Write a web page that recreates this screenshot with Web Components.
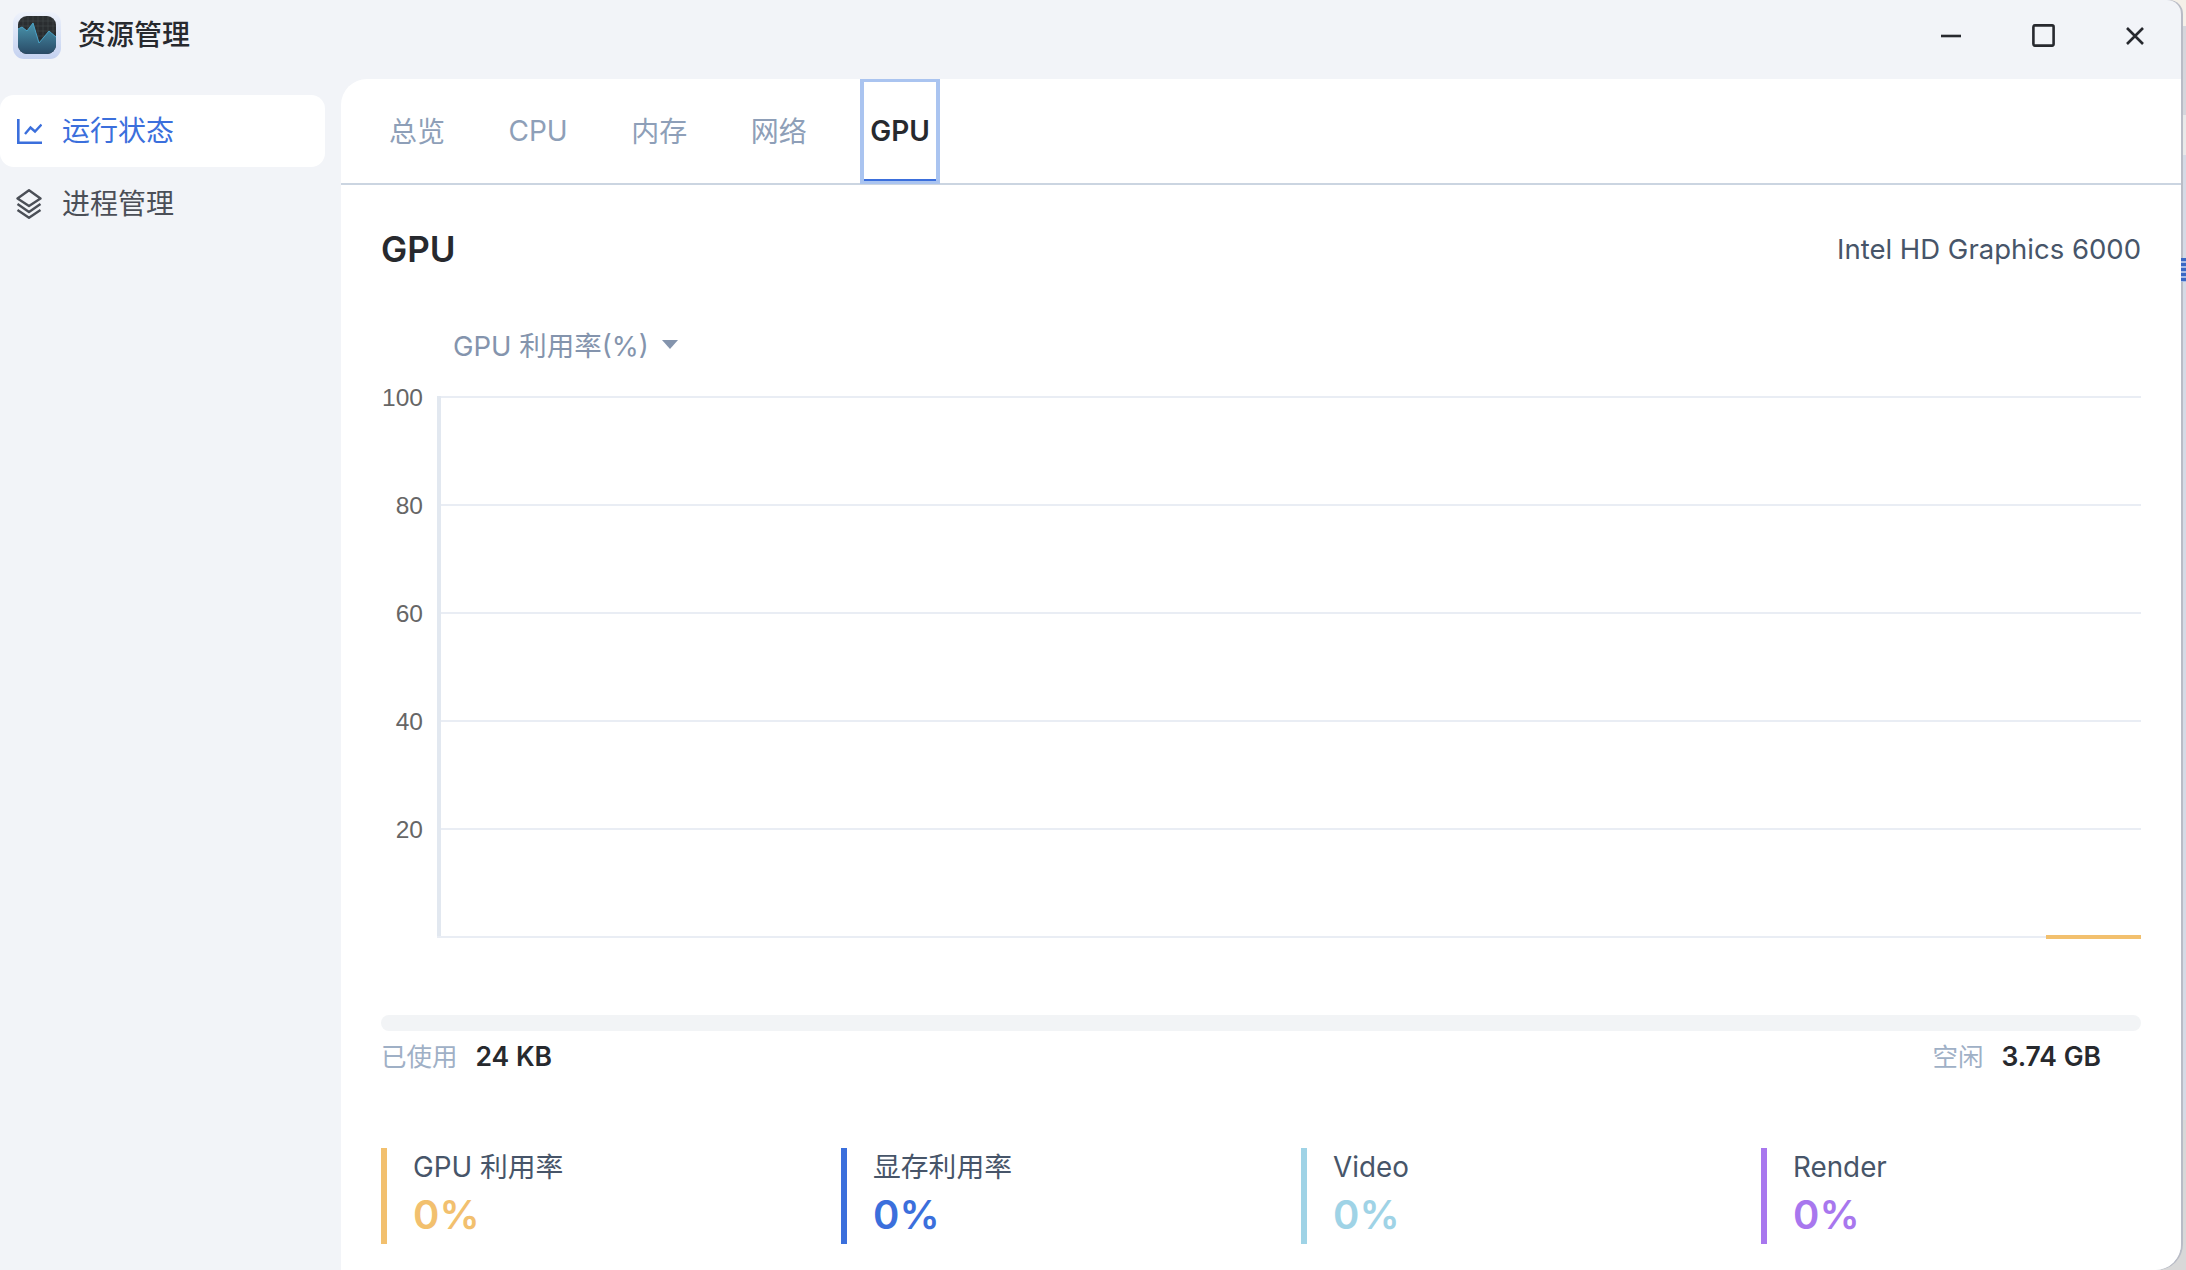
<!DOCTYPE html>
<html lang="zh-CN">
<head>
<meta charset="utf-8">
<title>资源管理</title>
<style>
  html, body { margin: 0; height: 100%; overflow: hidden; }
  body {
    font-family: Inter, "Noto Sans CJK SC", sans-serif;
    background: linear-gradient(to bottom, #f5f0e8 0 26px, #d5d6dc 26px 115px, #e9e9e9 115px 155px, #d5dae5 155px 1120px, #d8d8d8 1120px 100%);
  }
</style>
</head>
<body>
<app-window>
  <title-bar slot="title" heading="资源管理"></title-bar>
  <side-nav slot="nav">
    <nav-item icon="chart" active>运行状态</nav-item>
    <nav-item icon="layers">进程管理</nav-item>
  </side-nav>
  <tab-bar slot="tabs">
    <tab-item cjk>总览</tab-item>
    <tab-item>CPU</tab-item>
    <tab-item cjk>内存</tab-item>
    <tab-item cjk>网络</tab-item>
    <tab-item active>GPU</tab-item>
  </tab-bar>
  <gpu-panel slot="content" name="Intel HD Graphics 6000">
    <usage-chart label="GPU 利用率(%)"></usage-chart>
    <memory-meter used="24 KB" free="3.74 GB"></memory-meter>
    <stat-row>
      <stat-card label="GPU 利用率" value="0%" color="#f2c06e"></stat-card>
      <stat-card label="显存利用率" value="0%" color="#3b6fdc"></stat-card>
      <stat-card label="Video" value="0%" color="#9fd3e6"></stat-card>
      <stat-card label="Render" value="0%" color="#a877ee"></stat-card>
    </stat-row>
  </gpu-panel>
</app-window>

<script>
// Janela principal: barra de título, menu lateral e painel branco
class AppWindow extends HTMLElement {
  constructor() {
    super();
    this.attachShadow({ mode: 'open' });
  }

  connectedCallback() {
    this.shadowRoot.innerHTML = `
      <style>
        :host {
          display: block;
          position: relative;
          width: 2181px;
          height: 1270px;
        }
        .frame {
          display: grid;
          grid-template-columns: 341px 1fr;
          grid-template-rows: 79px 1fr;
          height: 100%;
          background: #f2f4f8;
          border-radius: 0 14px 26px 0;
          box-shadow: 2px 0 0 #b9bcc6;
          overflow: hidden;
        }
        .top { grid-column: 1 / 3; }
        .main {
          display: flex;
          flex-direction: column;
          background: #fff;
          border-top-left-radius: 26px;
          min-height: 0;
        }
        /* pedaço do texto da janela de trás que aparece na borda */
        .behind {
          position: absolute;
          left: 100%;
          top: 258px;
          width: 5px;
          height: 24px;
          background: repeating-linear-gradient(to bottom, #3b68c4 0 3px, #a9bde6 3px 5px);
        }
      </style>
      <div class="frame">
        <div class="top"><slot name="title"></slot></div>
        <slot name="nav"></slot>
        <div class="main">
          <slot name="tabs"></slot>
          <slot name="content"></slot>
        </div>
      </div>
      <div class="behind"></div>
    `;
  }
}

class TitleBar extends HTMLElement {
  constructor() {
    super();
    this.attachShadow({ mode: 'open' });
  }

  connectedCallback() {
    this.shadowRoot.innerHTML = `
      <style>
        :host {
          display: flex;
          align-items: center;
          box-sizing: border-box;
          height: 79px;
          padding: 0 0 8px 13px;
          color: #27292e;
        }
        .logo { display: block; flex: none; width: 48px; height: 48px; }
        h1 { margin: 0 0 1px 17px; font-size: 28px; line-height: 40px; font-weight: 500; }
        .controls { display: flex; margin-left: auto; }
        button {
          display: flex;
          align-items: center;
          justify-content: center;
          width: 92px;
          height: 71px;
          padding: 0;
          border: 0;
          background: none;
          color: inherit;
        }
      </style>
      <svg class="logo" viewBox="0 0 48 48">
        <defs>
          <linearGradient id="edge" x1="0" y1="0" x2="0" y2="1">
            <stop offset="0" stop-color="#eef2fb"/>
            <stop offset="1" stop-color="#c4d1f0"/>
          </linearGradient>
          <linearGradient id="dark" x1="0" y1="0" x2="0" y2="1">
            <stop offset="0" stop-color="#2c2f31"/>
            <stop offset="1" stop-color="#23262b"/>
          </linearGradient>
          <linearGradient id="area" x1="0" y1="0" x2="0" y2="1">
            <stop offset="0" stop-color="#4a95ad"/>
            <stop offset="1" stop-color="#294a66"/>
          </linearGradient>
          <clipPath id="inner"><rect x="5" y="4" width="38" height="38" rx="9"/></clipPath>
        </defs>
        <rect width="48" height="47" rx="11" fill="url(#edge)"/>
        <g clip-path="url(#inner)">
          <rect x="5" y="4" width="38" height="38" fill="url(#dark)"/>
          <path d="M10 4v38M15 4v38M20 4v38M25 4v38M30 4v38M35 4v38M40 4v38M5 9h38M5 14h38M5 19h38M5 24h38M5 29h38M5 34h38M5 39h38" stroke="#4a5052" stroke-width=".5" fill="none"/>
          <path d="M5 17 9 15 14 19 20 11 26 31 36 19 43 25V42H5Z" fill="url(#area)"/>
          <path d="M5 17 9 15 14 19 20 11 26 31 36 19 43 25" fill="none" stroke="#4aa3c8" stroke-width="1"/>
        </g>
      </svg>
      <h1>${this.getAttribute('heading')}</h1>
      <div class="controls">
        <button aria-label="minimizar">
          <svg width="20" height="4" viewBox="0 0 20 4"><path d="M0 2h20" stroke="currentColor" stroke-width="2.6"/></svg>
        </button>
        <button aria-label="maximizar">
          <svg width="23" height="23" viewBox="0 0 23 23"><rect x="1.4" y="1.4" width="20.2" height="20.2" rx="1.5" fill="none" stroke="currentColor" stroke-width="2.6"/></svg>
        </button>
        <button aria-label="fechar">
          <svg width="18" height="18" viewBox="0 0 18 18"><path d="M1 1l16 16M17 1 1 17" stroke="currentColor" stroke-width="2.6"/></svg>
        </button>
      </div>
    `;
  }
}

class SideNav extends HTMLElement {
  constructor() {
    super();
    this.attachShadow({ mode: 'open' });
  }

  connectedCallback() {
    this.shadowRoot.innerHTML = `
      <style>
        :host {
          display: flex;
          flex-direction: column;
          gap: 1px;
          box-sizing: border-box;
          padding: 16px 16px 0 0;
        }
      </style>
      <slot></slot>
    `;
  }
}

// Ícones do menu lateral
const NAV_ICONS = {
  chart: `<svg width="25" height="25" viewBox="0 0 25 25" fill="none" stroke="currentColor" stroke-width="2.6">
      <path d="M1.3 0v23.7H25"/>
      <path d="M8 15 13.5 8.5 18 12.5 24.5 5.5" stroke-width="2.4"/>
    </svg>`,
  layers: `<svg width="26" height="30" viewBox="0 0 26 30" fill="none" stroke="currentColor" stroke-width="2.4" stroke-linejoin="round" style="margin-left:-1px">
      <path d="M13 1.3 24.5 9.5 13 17 1.5 9.5Z"/>
      <path d="M1.5 15 13 23 24.5 15"/>
      <path d="M1.5 21 13 28.7 24.5 21"/>
    </svg>`,
};

class NavItem extends HTMLElement {
  constructor() {
    super();
    this.attachShadow({ mode: 'open' });
  }

  connectedCallback() {
    const icon = NAV_ICONS[this.getAttribute('icon')] || '';
    this.shadowRoot.innerHTML = `
      <style>
        :host {
          display: flex;
          align-items: center;
          box-sizing: border-box;
          height: 72px;
          padding-left: 17px;
          border-radius: 14px;
          color: #4b4f57;
          font-size: 28px;
        }
        :host([active]) { background: #fff; color: #3b6fdc; }
        .icon { display: flex; width: 45px; flex: none; }
        .text { padding-bottom: 5px; }
      </style>
      <span class="icon">${icon}</span>
      <span class="text"><slot></slot></span>
    `;
  }
}

class TabBar extends HTMLElement {
  constructor() {
    super();
    this.attachShadow({ mode: 'open' });
  }

  connectedCallback() {
    this.shadowRoot.innerHTML = `
      <style>
        :host {
          display: flex;
          flex: none;
          gap: 43.5px;
          box-sizing: border-box;
          height: 106px;
          padding-left: 38px;
          border-bottom: 2px solid #cbd5e1;
        }
      </style>
      <slot></slot>
    `;
  }
}

class TabItem extends HTMLElement {
  constructor() {
    super();
    this.attachShadow({ mode: 'open' });
  }

  connectedCallback() {
    this.shadowRoot.innerHTML = `
      <style>
        :host {
          display: block;
          position: relative;
          box-sizing: border-box;
          height: 105px;
          border: solid transparent;
          border-width: 3px 4px;
          color: #8e9fb8;
          font-size: 28px;
        }
        :host([active]) { border-color: #aac4f0; color: #27292e; font-weight: 600; }
        .label {
          display: flex;
          align-items: center;
          box-sizing: border-box;
          height: 99px;
          padding: 1px 6px 0;
          border-bottom: 2px solid transparent;
        }
        :host([cjk]) .label { padding: 0 6px 1px; }
        :host([active]) .label { border-bottom-color: #3b6fdc; }
      </style>
      <div class="label"><slot></slot></div>
    `;
  }
}

class GpuPanel extends HTMLElement {
  constructor() {
    super();
    this.attachShadow({ mode: 'open' });
  }

  connectedCallback() {
    this.shadowRoot.innerHTML = `
      <style>
        :host {
          display: block;
          box-sizing: border-box;
          padding: 44px 40px 0;
        }
        header {
          display: flex;
          align-items: center;
          justify-content: space-between;
          height: 40px;
        }
        h2 { margin: 0; font-size: 35px; font-weight: 600; color: #27292e; }
        .name { font-size: 27.5px; color: #475569; }
      </style>
      <header>
        <h2>GPU</h2>
        <span class="name">${this.getAttribute('name')}</span>
      </header>
      <slot></slot>
    `;
  }
}

// Gráfico de utilização: escala fixa de 0 a 100
class UsageChart extends HTMLElement {
  constructor() {
    super();
    this.attachShadow({ mode: 'open' });
  }

  connectedCallback() {
    const ticks = [100, 80, 60, 40, 20];
    const grid = ticks
      .map((tick, i) => {
        const y = 12 + i * 108;
        return `<rect x="60" y="${y - 1}" width="1700" height="2" fill="#e9edf4"/>
          <text x="42" y="${y + 9}" text-anchor="end">${tick}</text>`;
      })
      .join('');

    this.shadowRoot.innerHTML = `
      <style>
        :host { display: block; margin-top: 55px; }
        .legend {
          display: flex;
          align-items: center;
          gap: 13px;
          height: 40px;
          padding-left: 72px;
          color: #8494ad;
          font-size: 27.5px;
        }
        .caret {
          width: 0;
          height: 0;
          border: solid transparent;
          border-width: 9px 8px 0;
          border-top-color: #8494ad;
        }
        svg { display: block; margin-top: 21px; }
        text { font: 24.5px "Liberation Sans", sans-serif; fill: #666; }
      </style>
      <div class="legend">${this.getAttribute('label')}<span class="caret"></span></div>
      <svg width="1760" height="560" viewBox="0 0 1760 560">
        ${grid}
        <rect x="56" y="11" width="4" height="542" fill="#e2e8f0"/>
        <rect x="56" y="551" width="1704" height="2" fill="#e9edf4"/>
        <rect x="1665" y="550" width="95" height="4" fill="#f2c06e"/>
      </svg>
    `;
  }
}

class MemoryMeter extends HTMLElement {
  constructor() {
    super();
    this.attachShadow({ mode: 'open' });
  }

  connectedCallback() {
    this.shadowRoot.innerHTML = `
      <style>
        :host { display: block; margin-top: 70px; font-size: 25.5px; }
        .track { height: 16px; border-radius: 8px; background: #f2f4f6; }
        .info {
          display: flex;
          justify-content: space-between;
          align-items: center;
          height: 36px;
          margin-top: 5px;
          padding-right: 40px;
        }
        span { color: #9fb0c6; }
        b { margin-left: 18px; font-size: 26.5px; font-weight: 600; color: #27292e; }
      </style>
      <div class="track"></div>
      <div class="info">
        <div><span>已使用</span><b>${this.getAttribute('used')}</b></div>
        <div><span>空闲</span><b>${this.getAttribute('free')}</b></div>
      </div>
    `;
  }
}

class StatRow extends HTMLElement {
  constructor() {
    super();
    this.attachShadow({ mode: 'open' });
  }

  connectedCallback() {
    this.shadowRoot.innerHTML = `
      <style>
        :host {
          display: grid;
          grid-template-columns: repeat(4, 380px);
          column-gap: 80px;
          margin-top: 76px;
        }
      </style>
      <slot></slot>
    `;
  }
}

class StatCard extends HTMLElement {
  constructor() {
    super();
    this.attachShadow({ mode: 'open' });
  }

  connectedCallback() {
    const color = this.getAttribute('color');
    this.shadowRoot.innerHTML = `
      <style>
        :host {
          display: block;
          box-sizing: border-box;
          height: 96px;
          padding-left: 26px;
          border-left: 6px solid ${color};
        }
        .label { font-size: 27.8px; line-height: 38px; color: #475569; }
        .value { font-size: 40px; line-height: 58px; font-weight: 600; color: ${color}; }
      </style>
      <div class="label">${this.getAttribute('label')}</div>
      <div class="value">${this.getAttribute('value')}</div>
    `;
  }
}

// Registra os componentes
customElements.define('app-window', AppWindow);
customElements.define('title-bar', TitleBar);
customElements.define('side-nav', SideNav);
customElements.define('nav-item', NavItem);
customElements.define('tab-bar', TabBar);
customElements.define('tab-item', TabItem);
customElements.define('gpu-panel', GpuPanel);
customElements.define('usage-chart', UsageChart);
customElements.define('memory-meter', MemoryMeter);
customElements.define('stat-row', StatRow);
customElements.define('stat-card', StatCard);
</script>
</body>
</html>
